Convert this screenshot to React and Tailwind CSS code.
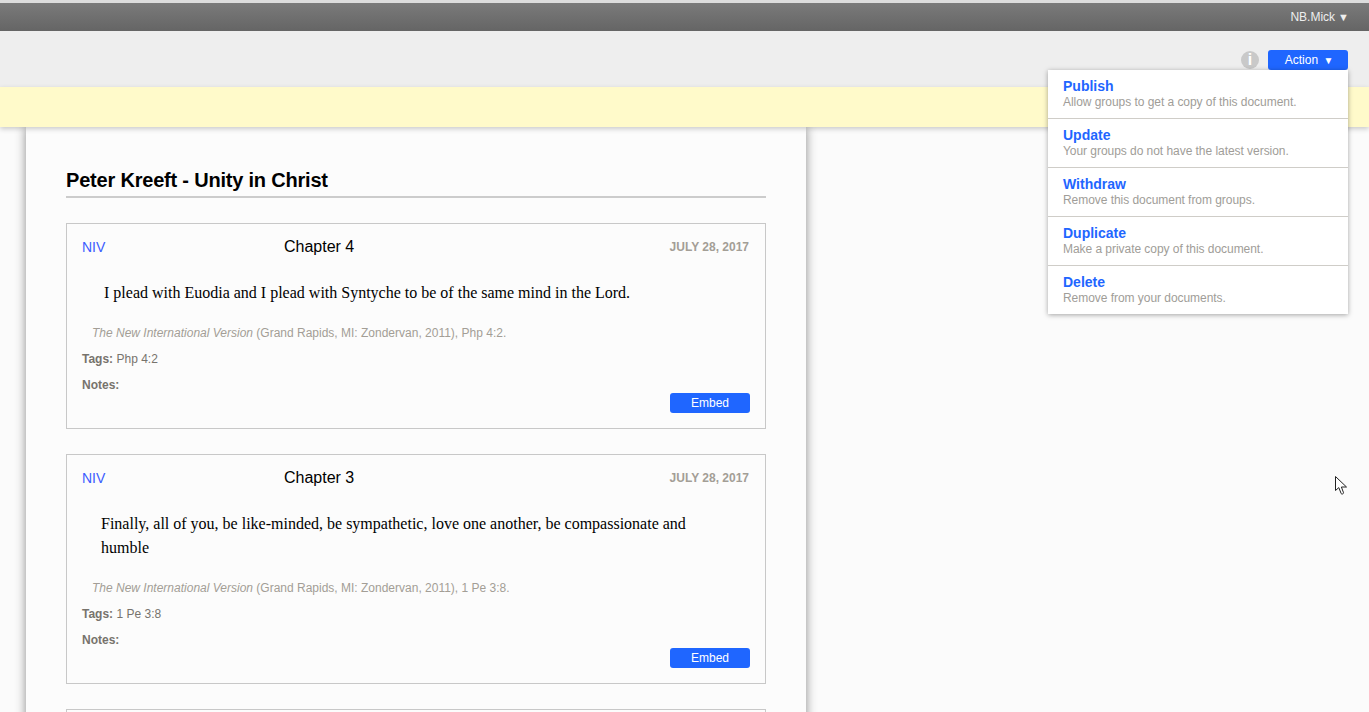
const menuItems = [
  { title: "Publish", text: "Allow groups to get a copy of this document." },
  { title: "Update", text: "Your groups do not have the latest version." },
  { title: "Withdraw", text: "Remove this document from groups." },
  { title: "Duplicate", text: "Make a private copy of this document." },
  { title: "Delete", text: "Remove from your documents." },
];

function Card({ chapter, verse, verseClass, reference, tag }) {
  return (
    <div className="mt-[25px] border border-[#c8c8c8] px-[15px]">
      <div className="flex items-center h-[46px]">
        <div className="w-[202px] text-[14px] text-[#3d5cff]">NIV</div>
        <div className="text-[16px] text-black">{chapter}</div>
        <div className="ml-auto pr-px text-[12px] font-bold text-[#a39e96]">JULY 28, 2017</div>
      </div>
      <p className={"mt-[11px] font-['Liberation_Serif',serif] text-[16px] leading-[24px] text-black " + verseClass}>{verse}</p>
      <div className="mt-[20px] pl-[10px] text-[12px] leading-[16px] text-[#a39e96]">
        <i>The New International Version</i> (Grand Rapids, MI: Zondervan, 2011), {reference}.
      </div>
      <div className="mt-[10px] text-[12px] leading-[16px] text-[#77736c]">
        <b>Tags:</b> {tag}
      </div>
      <div className="mt-[10px] text-[12px] leading-[16px] font-bold text-[#77736c]">Notes:</div>
      <div className="flex justify-end pb-[15px]">
        <button className="w-[80px] h-[20px] bg-[#1f66ff] rounded-[3px] text-white text-[12px] leading-[20px]">Embed</button>
      </div>
    </div>
  );
}

export default function App() {
  return (
    <div className="relative h-[712px] overflow-hidden bg-[#fbfbfb] font-['Liberation_Sans',Arial,sans-serif]">
      <div className="h-[3px] bg-[#dcdcdc]"></div>
      <div className="h-[28px] bg-gradient-to-b from-[#7a7a7a] to-[#656565] flex items-center justify-end pr-[20px] text-[12px] text-[#eeeeee]">
        NB.Mick <span className="ml-[3px] text-[11px]">▼</span>
      </div>
      <div className="h-[56px] bg-[#eeeeee] flex justify-end items-start pt-[19px] pr-[21px]">
        <div className="w-[18px] h-[18px] mt-px rounded-full bg-[#c9c9c9] text-white text-[16px] leading-[18px] font-bold text-center mr-[9px]">i</div>
        <button className="w-[80px] h-[20px] pl-[2px] bg-[#1f66ff] rounded-[3px] text-white text-[12px] leading-[20px]">
          Action <span className="ml-[2px] text-[10px]">▼</span>
        </button>
      </div>
      <div className="relative z-10 h-[40px] bg-[#fffaca] shadow-[0_2px_5px_rgba(0,0,0,0.2)]"></div>

      <div className="ml-[26px] w-[780px] px-[40px] bg-[#fcfcfc] shadow-[0_0_10px_rgba(0,0,0,0.45)] h-[600px]">
        <h1 className="pt-[40px] pb-[3px] text-[20px] leading-[26px] font-bold tracking-[-0.2px] text-black border-b-2 border-[#cccccc]">Peter Kreeft - Unity in Christ</h1>
        <Card
          chapter="Chapter 4"
          verse="I plead with Euodia and I plead with Syntyche to be of the same mind in the Lord."
          verseClass="pl-[22px]"
          reference="Php 4:2"
          tag="Php 4:2"
        />
        <Card
          chapter="Chapter 3"
          verse="Finally, all of you, be like-minded, be sympathetic, love one another, be compassionate and humble"
          verseClass="pl-[19px] pr-[50px]"
          reference="1 Pe 3:8"
          tag="1 Pe 3:8"
        />
        <div className="mt-[25px] h-[40px] border border-[#c8c8c8]"></div>
      </div>

      {/* dropdown sits over the page */}
      <div className="absolute z-20 left-[1048px] top-[70px] w-[300px] bg-white shadow-[0_1px_5px_rgba(0,0,0,0.35)]">
        {menuItems.map((item, i) => (
          <div key={item.title} className={"px-[15px] pt-[8px] " + (i < 4 ? "h-[49px] border-b border-[#cfcdc8]" : "h-[48px]")}>
            <div className="text-[14px] leading-[16px] font-bold text-[#1f66ff]">{item.title}</div>
            <div className="mt-px text-[12px] leading-[15px] tracking-[-0.045px] text-[#a09d98]">{item.text}</div>
          </div>
        ))}
      </div>

      {/* mouse pointer */}
      <svg className="absolute left-[1334px] top-[475px]" width="15" height="21" viewBox="0 0 15 21">
        <path d="M1.5 1.5V15.5L4.8 12.6L7.2 18.6C7.6 19.6 9.8 18.8 9.5 17.7L7.4 12H12.5Z" fill="white" stroke="#222" strokeWidth="1" />
      </svg>
    </div>
  );
}
